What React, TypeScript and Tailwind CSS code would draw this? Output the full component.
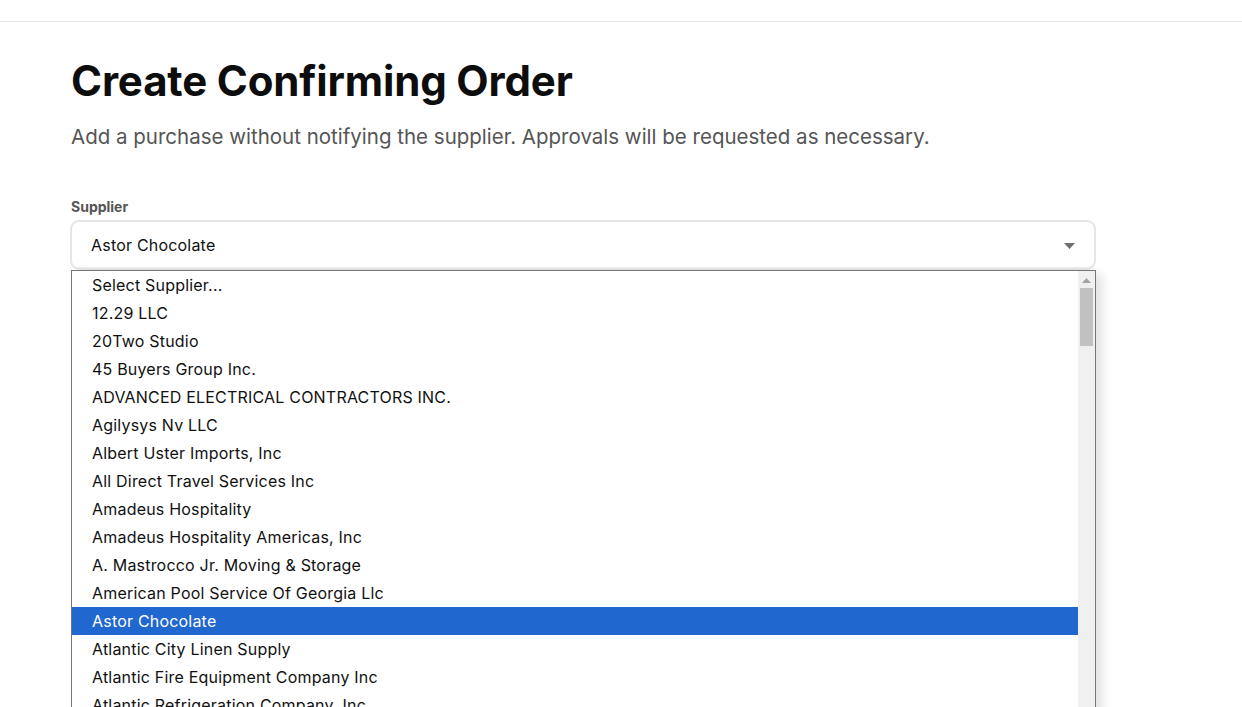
import React from "react"

const suppliers = [
  "Select Supplier...",
  "12.29 LLC",
  "20Two Studio",
  "45 Buyers Group Inc.",
  "ADVANCED ELECTRICAL CONTRACTORS INC.",
  "Agilysys Nv LLC",
  "Albert Uster Imports, Inc",
  "All Direct Travel Services Inc",
  "Amadeus Hospitality",
  "Amadeus Hospitality Americas, Inc",
  "A. Mastrocco Jr. Moving & Storage",
  "American Pool Service Of Georgia Llc",
  "Astor Chocolate",
  "Atlantic City Linen Supply",
  "Atlantic Fire Equipment Company Inc",
  "Atlantic Refrigeration Company, Inc",
  "Atlas Restaurant Supply",
]

const selected = "Astor Chocolate"

export default function App() {
  return (
    <div
      className="h-[707px] w-full overflow-hidden bg-white text-[#111]"
      style={{ fontFamily: "Inter, 'Noto Sans', sans-serif" }}
    >
      {/* Top bar */}
      <div className="h-[22px] border-b border-[#e8e8e8]" />

      <div className="pl-[71px] pr-[100px]">
        <h1 className="mt-[34px] text-[42px] font-bold leading-[50px] tracking-[-0.15px] text-[#0d0d0d]">
          Create Confirming Order
        </h1>
        <p className="mt-[17px] text-[20.5px] leading-[28px] text-[#555]">
          Add a purchase without notifying the supplier. Approvals will be requested as necessary.
        </p>

        <div className="mt-[46px] w-[1026px] -ml-px">
          <label className="block pl-px text-[14px] font-bold leading-[20px] text-[#555]">
            Supplier
          </label>

          <div className="relative mt-[3px]">
            {/* Select control */}
            <div className="flex h-[50px] items-center justify-between rounded-[9px] border-2 border-[#e6e6e6] pl-[19px] pr-[19px] shadow-[inset_0_-1px_0_#f0f0f0]">
              <span className="text-[16px] tracking-[0.2px] text-[#111]">{selected}</span>
              <svg width="11" height="6" viewBox="0 0 11 6" className="mt-px">
                <path d="M0 0 H11 L5.5 6 Z" fill="#6f6f6f" />
              </svg>
            </div>

            {/* Native-looking options popup */}
            <div className="absolute left-[1px] top-[50px] z-10 flex h-[460px] w-[1025px] border border-[#767676] bg-white shadow-[6px_4px_10px_rgba(0,0,0,0.12)]">
              <ul className="flex-1">
                {suppliers.map((s) => (
                  <li
                    key={s}
                    className={
                      s === selected
                        ? "h-[28px] bg-[#2067cf] pl-[20px] text-[16px] leading-[28px] tracking-[0.2px] text-white"
                        : "h-[28px] pl-[20px] text-[16px] leading-[28px] tracking-[0.2px] text-[#111]"
                    }
                  >
                    {s}
                  </li>
                ))}
              </ul>
              <div className="flex w-[17px] flex-col items-center bg-[#f0f0f0]">
                <svg width="9" height="5" viewBox="0 0 9 5" className="mt-[7px]">
                  <path d="M0 5 L4.5 0 L9 5 Z" fill="#a3a3a3" />
                </svg>
                <div className="mt-[5px] h-[58px] w-[13px] bg-[#c1c1c1]" />
              </div>
            </div>
          </div>
        </div>
      </div>
    </div>
  )
}
